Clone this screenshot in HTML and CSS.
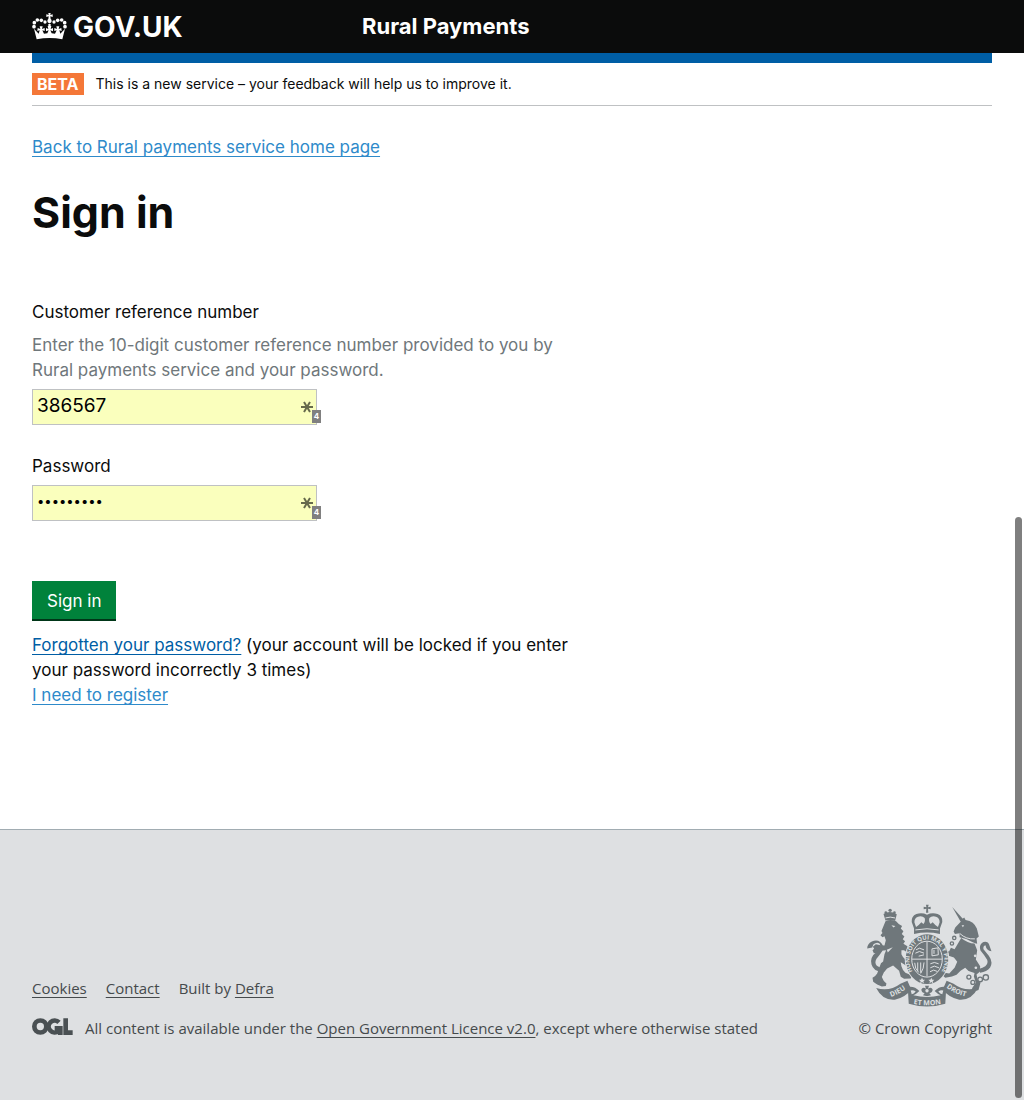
FILE: index.html
```html
<!DOCTYPE html>
<html lang="en">
<head>
<meta charset="utf-8">
<meta name="viewport" content="width=device-width, initial-scale=1">
<title>Sign in - Rural Payments - GOV.UK</title>
<link rel="stylesheet" href="styles.css">
</head>
<body>
<header class="site-header">
  <div class="site-header-inner">
    <div class="logo">
      <svg class="logo-crown" viewBox="0 0 105 81" aria-hidden="true">
        <g fill="#fff">
          <path d="M49 0h7l-1 6 7-2v8l-7-2 1 9h-7l1-9-7 2V4l7 2z"/>
          <circle cx="52.500" cy="24" r="6.500"/>
          <circle cx="52.500" cy="36" r="4"/>
          <circle cx="39" cy="27" r="5"/><circle cx="28" cy="22" r="5.500"/><circle cx="16" cy="21" r="5.500"/>
          <circle cx="7" cy="29" r="5.500"/><circle cx="6" cy="41" r="5.500"/>
          <circle cx="66" cy="27" r="5"/><circle cx="77" cy="22" r="5.500"/><circle cx="89" cy="21" r="5.500"/>
          <circle cx="98" cy="29" r="5.500"/><circle cx="99" cy="41" r="5.500"/>
          <path d="M14 79 6 47l14 15 3-10-7 2 1-9 8 3-2-8h9l-2 8 8-3v9l-7-2 5 10 10-1 4-9-8 3v-10l7 3-2-9h11l-2 9 7-3v10l-8-3 4 9 10 1 5-10-7 2v-9l8 3-2-8h9l-2 8 8-3 1 9-7-2 3 10 14-15-8 32q-38-8-77 0z"/>
        </g>
      </svg>
      <span class="logo-text">GOV.UK</span>
    </div>
    <div class="service-name">Rural Payments</div>
  </div>
</header>

<div class="page">
  <div class="phase-banner">
    <strong class="phase-tag">BETA</strong>
    <span>This is a new service – your feedback will help us to improve it.</span>
  </div>

  <main class="content">
    <a class="back-link light-link" href="#home">Back to Rural payments service home page</a>
    <h1>Sign in</h1>

    <form class="sign-in">
      <div class="field">
        <label for="crn">Customer reference number</label>
        <p class="hint" id="crn-hint">Enter the 10-digit customer reference number provided to you by Rural payments service and your password.</p>
        <div class="input-wrap">
          <input id="crn" type="text" value="386567" aria-describedby="crn-hint">
          <svg class="star" viewBox="0 0 12 12" aria-hidden="true"><path d="M0 6h12M3 1l6 10M9 1L3 11"/></svg>
          <span class="count">4</span>
        </div>
      </div>
      <div class="field">
        <label for="password">Password</label>
        <div class="input-wrap">
          <input id="password" type="password" value="abcdefghi">
          <svg class="star" viewBox="0 0 12 12" aria-hidden="true"><path d="M0 6h12M3 1l6 10M9 1L3 11"/></svg>
          <span class="count">4</span>
        </div>
      </div>
      <button class="button" type="button">Sign in</button>
    </form>

    <p class="help"><a href="#forgotten">Forgotten your password?</a> (your account will be locked if you enter your password incorrectly 3 times)</p>
    <p class="help"><a class="light-link" href="#register">I need to register</a></p>
  </main>
</div>

<footer class="site-footer">
  <div class="footer-inner">
    <div class="footer-meta">
      <ul class="footer-links">
        <li><a href="#cookies">Cookies</a></li>
        <li><a href="#contact">Contact</a></li>
        <li>Built by <a href="#defra">Defra</a></li>
      </ul>
      <div class="licence">
        <svg class="ogl" viewBox="0 0 123 51" role="img" aria-label="Open Government Licence">
          <g fill="none" stroke="#4a5053" stroke-width="14">
            <circle cx="25" cy="25.500" r="18"/>
            <path d="M81 13A18 18 0 1 0 80 39M68 31h17v20"/>
            <path d="M101 1v43h21"/>
          </g>
        </svg>
        <p>All content is available under the <a href="#ogl">Open Government Licence v2.0</a>, except where otherwise stated</p>
      </div>
    </div>
    <div class="copyright">
      <svg class="arms" viewBox="20 28 378 310" aria-hidden="true">
        <defs>
          <path id="garter" d="M158 228A53 61 0 1 1 248 228"/>
          <path id="ribbon-left" d="M84 311Q118 302 148 277"/>
          <path id="ribbon-mid" d="M156 328Q203 337 252 328"/>
          <path id="ribbon-right" d="M254 274Q286 301 328 308"/>
        </defs>
        <g fill="#6f777b">
          <!-- lion -->
          <path d="M78 80q14-7 32 0l8 8 10 6-4 8 8 8-5 8 8 8-5 8 7 6-5 8 12 7 8 9-3 14-7-5-8-6-8 0 0 12q4 10 12 16l9 10-4 12-7-6-12-8 2 12q4 14 12 20l14 6q6 7 2 11l-20 1-10-6-5-18-18-16-18 9-10 12-6 14 6 12 8 7-2 8-12 1-14-6-12-8-2-12 8-5 6-8 8-22q2-10 10-14l4-22 5-12-16 2-9 6-12 1-4-9 5-4-4-6 9-8 14 3 12 1 4-16-4-12-6 3-6-6 6-7-3-6z"/>
          <path d="M66 232q-24-2-30-22-6-22 16-38 16-13 8-25-8-6-18 2l-4 10-15 3q0-14 14-21 14-7 25 1 14 11 6 28-8 12-17 23-7 12 1 21l15 8z"/>
          <path d="M78 78l-6-20q19-12 40 1l-5 20q-15-5-29-1z"/>
          <circle cx="92" cy="47" r="5"/><circle cx="79" cy="54" r="4"/><circle cx="105" cy="54" r="4"/>
          <!-- unicorn -->
          <path d="M279 37l35 39-10 5z"/>
          <path d="M305 76l10-7 4 7q26 4 34 26l6 24-7 6 2 16-6-2-9-4-18-9-20-5 0-12-14 2-4-7 5-12 17-18z"/>
          <path d="M306 130q19 16 40 17l8 20-4 28 13 20-1 17-10 8 4 18 8 7-6 22-15 5-9 3 6-16 10-14-6-19 2-10-18-6-10-10-14 9-12 12-14 5-20 4-8-7 6-8 14 2 16-17 8-18-10-13-18-6-14 15 4 14-6 3-12-12 1-9 12-19-16-10-10 3 0-8 8-5 27 9 9 8 6-12 11 4z"/>
          <path d="M358 224q33-7 26-28-9-15-20-28-6-18 9-26 12-3 16 6l8 22q-15-1-18-18-8 0-6 12l16 20q14 19 4 35-10 13-30 16z"/>
          <!-- crown -->
          <path d="M200 30h8l-2 8 8-2v8l-8-2 1 12h-7l1-12-8 2v-8l8 2z"/>
          <path d="M164 102l-7-20q-2-17 14-24 17-5 32 2 15-7 32-2 16 7 14 24l-7 20 0 16q-39-9-78 0z"/>
        </g>
        <g fill="#dee0e2">
          <path d="M170 97l-5-14q0-14 11-17 13-3 20 4 3 11-4 18l-6-5-8 8z"/>
          <path d="M236 97l5-14q0-14-11-17-13-3-20 4-3 11 4 18l6-5 8 8z"/>
        </g>
        <g fill="none" stroke="#dee0e2" stroke-width="3">
          <path d="M168 106q35-7 70 0M302 117q19 18 45 16M78 70q14-5 29 0"/>
        </g>
        <g fill="none" stroke="#6f777b" stroke-width="4">
          <circle cx="285" cy="130" r="5"/><circle cx="278" cy="147" r="5"/><circle cx="282" cy="173" r="5"/>
          <circle cx="329" cy="248" r="6"/><circle cx="341" cy="264" r="6"/><circle cx="363" cy="255" r="7"/><circle cx="380" cy="249" r="8"/>
        </g>
        <g fill="#dee0e2"><circle cx="348" cy="184" r="4"/><circle cx="350" cy="220" r="4"/><path d="M96 92l12 2-6 5zM82 166l18-8-15 16zM307 92l8 0-4 6z"/></g>
        <!-- shield and garter -->
        <ellipse cx="203" cy="194" rx="67" ry="78" fill="#dee0e2"/>
        <ellipse cx="203" cy="194" rx="64" ry="75" fill="#6f777b"/>
        <ellipse cx="203" cy="194" rx="46" ry="54" fill="none" stroke="#dee0e2" stroke-width="3"/>
        <g fill="none" stroke="#dee0e2" stroke-width="3">
          <path d="M203 142v104M158 194h91"/>
          <path d="M170 166l10-5 14 5M168 176l12-5 14 5M178 185l16-4M236 160l-18 3v21l19-3zM224 166v12M166 205q0 18 12 29M175 204v26M184 204v31M194 204q0 18-10 33M213 208l12-4 13 4M213 220l12-5 14 5M212 232l11-5 11 4"/>
        </g>
        <g fill="#dee0e2"><path d="M188 250l3 6 6 0-5 5 2 6-6-4-6 4 2-6-5-5 6 0zM216 250l3 6 6 0-5 5 2 6-6-4-6 4 2-6-5-5 6 0z"/></g>
        <text class="garter-text"><textPath href="#garter" startOffset="50%">HONI SOIT QUI MAL Y PENSE</textPath></text>
        <!-- rose and ribbon -->
        <path d="M50 281q40 12 73-13l21-9 12 27q-20 24-50 30-37 3-56-35zM356 281q-40 12-73-13l-21-9-12 27q20 24 50 30 37 3 56-35z" fill="#6f777b"/>
        <path d="M145 278q20-4 35 12-10 10-18 13 41 10 82 0-8-3-18-13 15-16 35-12l-3 50q-55 17-110 0z" fill="#6f777b"/>
        <path d="M154 288q8-2 15 3-6 7-12 9zM252 288q-8-2-15 3 6 7 12 9z" fill="#dee0e2"/>
        <path d="M197 274h12l-3 9q10-7 14 2 0 9-10 11l5 7-12 3-12-3 5-7q-10-2-10-11 4-9 14-2z" fill="#6f777b"/>
        <circle cx="203" cy="289" r="5" fill="#dee0e2"/>
        <text class="ribbon-text"><textPath href="#ribbon-left" startOffset="50%">DIEU</textPath></text>
        <text class="ribbon-text"><textPath href="#ribbon-mid" startOffset="50%">ET MON</textPath></text>
        <text class="ribbon-text"><textPath href="#ribbon-right" startOffset="50%">DROIT</textPath></text>
      </svg>
      <span>© Crown Copyright</span>
    </div>
  </div>
</footer>
<div class="scroll-thumb" aria-hidden="true"></div>
</body>
</html>
```
FILE: styles.css
```css
* {
  box-sizing: border-box;
}

body {
  display: flex;
  flex-direction: column;
  min-height: 100vh;
  margin: 0;
  background: #fff;
  color: #0b0c0c;
  font: 17px/25px Inter, "Liberation Sans", sans-serif;
}

a {
  color: #005ea5;
  text-decoration-skip-ink: none;
  text-underline-offset: 3px;
}

.light-link {
  color: #2e8aca;
}

p,
h1,
ul {
  margin: 0;
}

.site-header {
  background: #0b0c0c;
  color: #fff;
}

.site-header-inner {
  display: grid;
  grid-template-columns: 1fr 2fr;
  gap: 15px;
  align-items: center;
  min-height: 53px;
  margin: 0 32px;
}

.logo {
  display: flex;
  align-items: center;
  gap: 6px;
}

.logo-crown {
  width: 35px;
  height: 27px;
}

.logo-text {
  font-size: 28px;
  line-height: 32px;
  font-weight: 700;
}

.service-name {
  padding-bottom: 2px;
  font-size: 22px;
  line-height: 32px;
  font-weight: 700;
}

.page {
  margin: 0 32px;
  border-top: 10px solid #005ea5;
}

.phase-banner {
  display: flex;
  align-items: center;
  gap: 12px;
  padding: 10px 0;
  border-bottom: 1px solid #bfc1c3;
  font-size: 14px;
  line-height: 22px;
}

.phase-tag {
  padding: 0 5px;
  background: #f47738;
  color: #fff;
  font-size: 16px;
}

.content {
  max-width: 560px;
  padding: 29px 0 121px;
}

h1 {
  margin-top: 27px;
  font-size: 43px;
  line-height: 50px;
  font-weight: 700;
}

.sign-in {
  padding: 63px 0 14px;
}

.field {
  display: flex;
  flex-direction: column;
  margin-bottom: 29px;
}

.hint {
  margin-top: 8px;
  color: #6f777b;
}

.input-wrap {
  position: relative;
  width: 285px;
  max-width: 100%;
  margin-top: 6px;
}

.input-wrap input {
  display: block;
  width: 100%;
  height: 36px;
  padding: 0 4px 4px;
  border: 1px solid #bfc1c3;
  border-radius: 0;
  background: #faffbd;
  color: #000;
  font: 19px/25px Inter, "Liberation Sans", sans-serif;
}

.input-wrap input[type="password"] {
  font-size: 13px;
}

.star {
  position: absolute;
  top: 12px;
  right: 4px;
  width: 12px;
  height: 12px;
  fill: none;
  stroke: #666a4c;
  stroke-width: 2;
}

.count {
  position: absolute;
  right: -4px;
  bottom: 2px;
  width: 9px;
  background: #808080;
  color: #fff;
  font-size: 8px;
  line-height: 13px;
  font-weight: 700;
  text-align: center;
}

.button {
  display: block;
  margin: 60px 0 0;
  padding: 8px 15px 5px;
  border: 0;
  background: #00823b;
  box-shadow: 0 2px 0 #003618;
  color: #fff;
  font: 17px/25px Inter, "Liberation Sans", sans-serif;
}

.site-footer {
  flex-grow: 1;
  padding: 74px 32px 56px;
  border-top: 1px solid #a1acb2;
  background: #dee0e2;
  color: #454a4c;
  font: 15px/24px "Open Sans", "Liberation Sans", sans-serif;
}

.site-footer a {
  color: inherit;
}

.footer-inner {
  display: flex;
  justify-content: space-between;
  align-items: flex-end;
}

.footer-links {
  display: flex;
  gap: 19px;
  padding: 0;
  list-style: none;
}

.licence {
  display: flex;
  gap: 12px;
  margin-top: 16px;
}

.ogl {
  flex: none;
  width: 41px;
  height: 17px;
  margin-top: 2px;
}

.copyright {
  display: flex;
  flex-direction: column;
  align-items: flex-end;
  gap: 9px;
}

.arms {
  width: 126px;
  height: 103px;
}

.garter-text,
.ribbon-text {
  fill: #dee0e2;
  font: 700 21px "Open Sans", sans-serif;
  text-anchor: middle;
}

.garter-text {
  font-size: 18px;
}

.scroll-thumb {
  position: fixed;
  right: 2px;
  bottom: 2px;
  width: 7px;
  height: 581px;
  border-radius: 4px;
  background: rgba(0, 0, 0, 0.5);
}
```
